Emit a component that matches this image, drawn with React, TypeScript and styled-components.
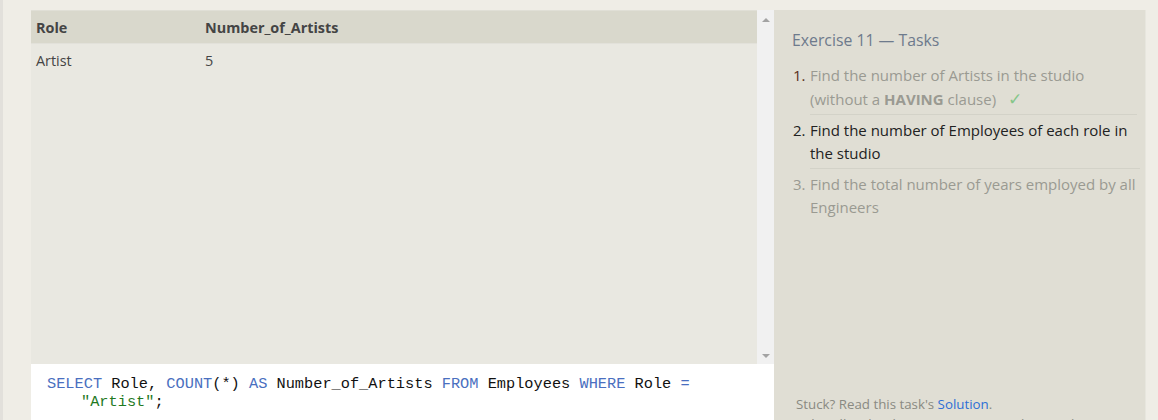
import React from "react";
import styled, { createGlobalStyle } from "styled-components";

const Global = createGlobalStyle`
  html, body { margin: 0; padding: 0; }
  body {
    background: #efede6;
    font-family: "Open Sans", "Noto Sans", sans-serif;
    overflow: hidden;
  }
`;

const Page = styled.div`
  display: flex;
  height: 420px;
  overflow: hidden;
`;

const SideStrip = styled.div`
  width: 3px;
  flex: none;
  background: #e2e0db;
`;

const Main = styled.div`
  display: flex;
  padding: 10px 0 0 28px;
  flex: 1;
  min-width: 0;
`;

const LeftCol = styled.div`
  width: 743px;
  flex: none;
  display: flex;
  flex-direction: column;
`;

const ResultArea = styled.div`
  height: 354px;
  flex: none;
  display: flex;
  background: #e9e8e1;
`;

const TableWrap = styled.div`
  flex: 1;
`;

const Table = styled.table`
  width: 100%;
  border-collapse: collapse;
  font-size: 14.4px;
  color: #3d3d3d;
`;

const Th = styled.th<{ $w?: number }>`
  text-align: left;
  background: #d9d8cc;
  border-top: 1px solid #e0dfd6;
  border-bottom: 1px solid #e2e1da;
  height: 32px;
  padding: 0 5px;
  font-weight: 700;
  color: #444;
  width: ${(p) => (p.$w ? `${p.$w}px` : "auto")};
`;

const Td = styled.td`
  padding: 0 5px;
  height: 32px;
  color: #444;
`;

const Scrollbar = styled.div`
  width: 17px;
  flex: none;
  background: #f1f1f1;
  display: flex;
  flex-direction: column;
  justify-content: space-between;
  align-items: center;
  padding: 8px 0 6px;
  box-sizing: border-box;
`;

const Arrow = styled.div<{ $down?: boolean }>`
  width: 0;
  height: 0;
  border-left: 4px solid transparent;
  border-right: 4px solid transparent;
  ${(p) =>
    p.$down
      ? "border-top: 4px solid #a3a3a3;"
      : "border-bottom: 4px solid #a3a3a3;"}
`;

const Editor = styled.div`
  flex: 1;
  background: #ffffff;
  padding: 11px 16px;
  font-family: "Liberation Mono", "DejaVu Sans Mono", monospace;
  font-size: 15.3px;
  line-height: 18px;
  color: #111;
  white-space: pre;
`;

const Kw = styled.span`
  color: #4a6fc0;
`;

const Str = styled.span`
  color: #1f7a1f;
`;

const Indent = styled.div`
  padding-left: 34px;
`;

const TaskPanel = styled.div`
  width: 372px;
  flex: none;
  background: #e0ded4;
  border-right: 1px solid #e7e6de;
  padding: 19px 5px 0 17px;
  box-sizing: border-box;
  display: flex;
  flex-direction: column;
`;

const Title = styled.div`
  font-size: 15.8px;
  color: #6e7a8c;
  margin: 0 0 9px 1px;
  line-height: 22px;
`;

const List = styled.ol`
  margin: 0;
  padding: 0 0 0 19px;
  list-style: none;
  flex: 1;
`;

const Item = styled.li<{ $active?: boolean }>`
  position: relative;
  font-size: 15px;
  line-height: 23px;
  padding: 4px 0 3px 0;
  color: ${(p) => (p.$active ? "#222" : "#9a9a92")};
  border-bottom: 1px solid #d3d2c8;
  &:last-child { border-bottom: none; }
  &::before {
    content: attr(data-n) ".";
    position: absolute;
    left: -17px;
    color: ${(p) => (p.$active ? "#222" : "#9a9a92")};
  }
`;

const FirstItem = styled(Item)`
  margin-right: 3px;
  &::before { color: #5a3020; }
`;

const Check = styled.span`
  color: #86c68a;
  margin-left: 12px;
  font-size: 17px;
`;

const Footer = styled.div`
  font-size: 13.3px;
  color: #8a8a82;
  line-height: 20px;
  padding: 0 0 0 5px;
  margin: auto 0 -14px;
`;

const Link = styled.a`
  color: #2d6fd6;
  text-decoration: none;
`;

export default function App() {
  return (
    <>
      <Global />
      <Page>
        <SideStrip />
        <Main>
          <LeftCol>
            <ResultArea>
              <TableWrap>
                <Table>
                  <thead>
                    <tr>
                      <Th $w={159}>Role</Th>
                      <Th>Number_of_Artists</Th>
                    </tr>
                  </thead>
                  <tbody>
                    <tr>
                      <Td>Artist</Td>
                      <Td>5</Td>
                    </tr>
                  </tbody>
                </Table>
              </TableWrap>
              <Scrollbar>
                <Arrow />
                <Arrow $down />
              </Scrollbar>
            </ResultArea>
            <Editor>
              <div>
                <Kw>SELECT</Kw> Role, <Kw>COUNT</Kw>(*) <Kw>AS</Kw> Number_of_Artists{" "}
                <Kw>FROM</Kw> Employees <Kw>WHERE</Kw> Role <Kw>=</Kw>
              </div>
              <Indent>
                <Str>"Artist"</Str>;
              </Indent>
            </Editor>
          </LeftCol>
          <TaskPanel>
            <Title>Exercise 11 — Tasks</Title>
            <List>
              <FirstItem data-n="1">
                Find the number of Artists in the studio (without a <b>HAVING</b> clause)
                <Check>✓</Check>
              </FirstItem>
              <Item data-n="2" $active>
                Find the number of Employees of each role in the studio
              </Item>
              <Item data-n="3">
                Find the total number of years employed by all Engineers
              </Item>
            </List>
            <Footer>
              <div>
                Stuck? Read this task's <Link href="#">Solution</Link>.
              </div>
              <div>Solve all tasks above to continue to the next lesson.</div>
            </Footer>
          </TaskPanel>
        </Main>
      </Page>
    </>
  );
}
